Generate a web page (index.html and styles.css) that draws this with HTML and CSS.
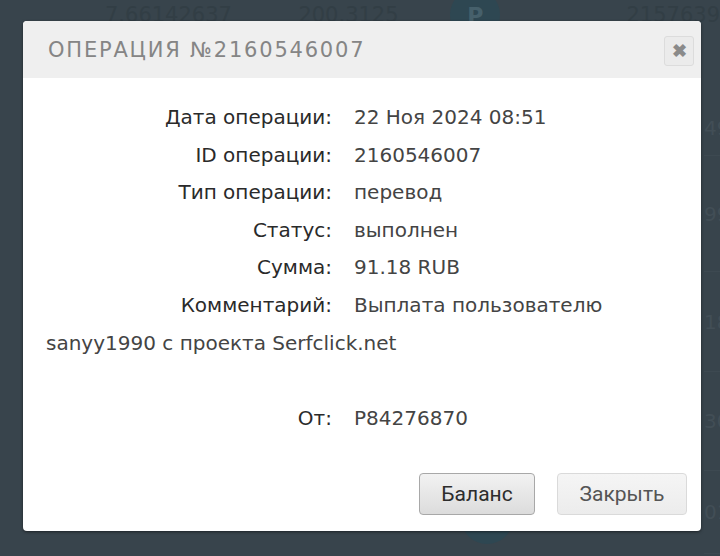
FILE: index.html
```html
<!DOCTYPE html>
<html lang="ru">
<head>
<meta charset="utf-8">
<title>Операция</title>
<link rel="stylesheet" href="styles.css">
</head>
<body>
<div class="page">
  <div class="bg-row">
    <span class="bg-cell c1">7.66142637</span>
    <span class="bg-cell c2">200.3125</span>
    <span class="bg-avatar">P</span>
    <span class="bg-cell c4">2157639</span>
  </div>
  <div class="bg-side">
    <div class="bg-side-row r1">49</div>
    <div class="bg-side-row r2">99</div>
    <div class="bg-side-row r3">18</div>
    <div class="bg-side-row r4">30</div>
    <div class="bg-side-row r5">01</div>
  </div>
  <div class="bg-avatar bg-avatar-bottom"></div>
</div>

<div class="modal">
  <div class="modal-header">
    <h2 class="modal-title">Операция №2160546007</h2>
    <button class="modal-close" type="button">&#10006;</button>
  </div>
  <div class="modal-body">
    <div class="row"><span class="label">Дата операции:</span><span class="value">22 Ноя 2024 08:51</span></div>
    <div class="row"><span class="label">ID операции:</span><span class="value">2160546007</span></div>
    <div class="row"><span class="label">Тип операции:</span><span class="value">перевод</span></div>
    <div class="row"><span class="label">Статус:</span><span class="value">выполнен</span></div>
    <div class="row"><span class="label">Сумма:</span><span class="value">91.18 RUB</span></div>
    <div class="row"><span class="label">Комментарий:</span><span class="value">Выплата пользователю</span><br><span class="value">sanyy1990 с проекта Serfclick.net</span></div>
    <div class="row blank"></div>
    <div class="row"><span class="label">От:</span><span class="value">P84276870</span></div>
  </div>
  <div class="modal-footer">
    <button class="btn btn-primary" type="button">Баланс</button>
    <button class="btn btn-secondary" type="button">Закрыть</button>
  </div>
</div>
</body>
</html>
```

FILE: styles.css
```css
html, body {
  margin: 0;
  padding: 0;
  overflow: hidden;
}
body {
  width: 720px;
  height: 556px;
  background: #38444c;
  font-family: "DejaVu Sans", sans-serif;
  position: relative;
}
.page {
  width: 720px;
  height: 556px;
  position: relative;
  overflow: hidden;
}
.bg-row {
  display: flex;
  align-items: center;
  height: 52px;
  margin-top: -11px;
  color: #323e45;
  font-size: 21px;
}
.bg-cell.c1 { margin-left: 105px; width: 200px; }
.bg-cell.c2 { width: 157px; }
.bg-cell.c4 { margin-left: 126px; }
.bg-avatar {
  width: 52px;
  height: 52px;
  border-radius: 50%;
  background: #2e4752;
  color: #46606b;
  display: flex;
  align-items: center;
  justify-content: center;
  font-weight: bold;
  font-size: 22px;
}
.bg-side {
  position: absolute;
  left: 704px;
  top: 100px;
  color: #424e56;
  font-size: 20px;
}
.bg-side-row {
  display: flex;
  align-items: center;
  border-bottom: 1px solid #3d4951;
  box-sizing: border-box;
}
.bg-side-row.r1 { height: 56px; }
.bg-side-row.r2 { height: 116px; }
.bg-side-row.r3 { height: 100px; }
.bg-side-row.r4 { height: 99px; }
.bg-side-row.r5 { height: 83px; }
.bg-avatar-bottom {
  position: absolute;
  left: 461px;
  top: 492px;
}

.modal {
  position: absolute;
  left: 23px;
  top: 21px;
  width: 678px;
  height: 510px;
  background: #fff;
  border-radius: 4px;
  box-shadow: 0 1px 3px rgba(0,0,0,0.5);
  overflow: hidden;
  display: flex;
  flex-direction: column;
}
.modal-header {
  height: 57px;
  background: #efefef;
  display: flex;
  align-items: center;
  justify-content: space-between;
  padding: 0 7px 0 25px;
}
.modal-title {
  margin: 0;
  font-family: "DejaVu Sans", sans-serif;
  font-weight: normal;
  font-size: 21px;
  letter-spacing: 1.8px;
  text-transform: uppercase;
  color: #858585;
}
.modal-close {
  width: 30px;
  height: 30px;
  padding: 0;
  border: 1px solid #dcdcdc;
  border-radius: 3px;
  background: #ebebeb;
  color: #8a8a8a;
  font-size: 18px;
  font-weight: bold;
  line-height: 28px;
  text-align: center;
  margin-top: 2px;
}
.modal-body {
  padding: 21px 30px 0 23px;
  font-size: 20px;
  line-height: 37.6px;
  color: #333;
  flex: 1;
}
.row.blank {
  height: 37.6px;
}
.label {
  display: inline-block;
  width: 286px;
  text-align: right;
  margin-right: 22px;
  color: #2a2a2a;
}
.value {
  color: #444;
}
.modal-footer {
  display: flex;
  justify-content: flex-end;
  gap: 22px;
  padding: 0 14px 16px 0;
}
.btn {
  height: 42px;
  border-radius: 4px;
  font-family: "Roboto", sans-serif;
  font-size: 21px;
  padding: 0;
}
.btn-primary {
  width: 116px;
  border: 1px solid #a8a8a8;
  background: linear-gradient(#f2f2f2, #dcdcdc);
  color: #2d2d2d;
}
.btn-secondary {
  width: 130px;
  border: 1px solid #dadada;
  background: linear-gradient(#f5f5f5, #ececec);
  color: #555;
}
```
